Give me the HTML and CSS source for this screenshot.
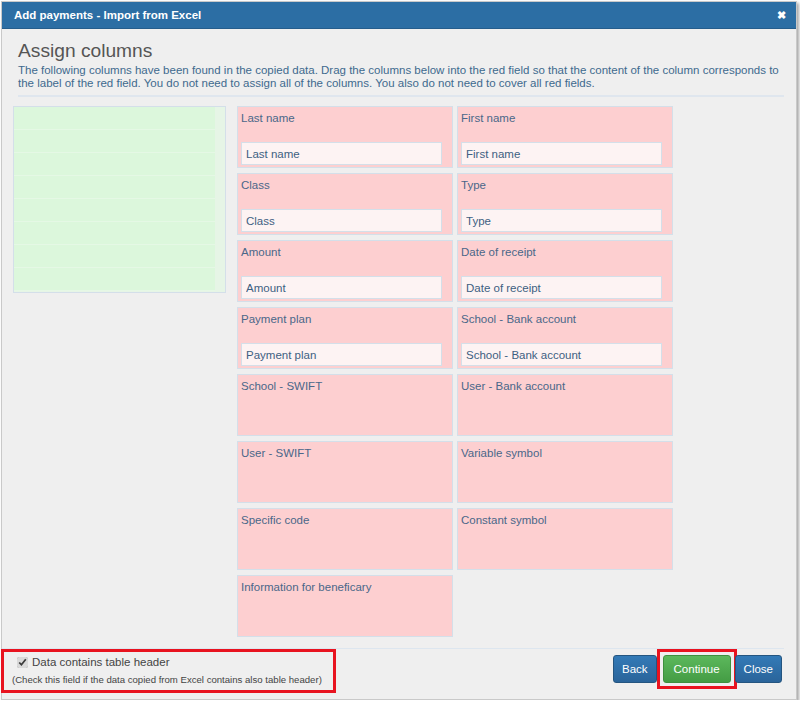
FILE: index.html
```html
<!DOCTYPE html>
<html lang="en">
<head>
    <meta charset="UTF-8">
    <title>Add payments - Import from Excel</title>
    <link rel="stylesheet" href="styles.css">
</head>
<body>
    <div class="dialog">
        <div class="dialog-header">
            <span class="dialog-title">Add payments - Import from Excel</span>
            <span class="dialog-close">&#10006;</span>
        </div>

        <div class="dialog-body">
            <h2>Assign columns</h2>
            <p class="intro">The following columns have been found in the copied data. Drag the columns below into the red field so that the content of the column corresponds to the label of the red field. You do not need to assign all of the columns. You also do not need to cover all red fields.</p>

            <div class="assign">
                <div class="source">
                    <div class="source-list">
                        <div class="source-row"></div>
                        <div class="source-row"></div>
                        <div class="source-row"></div>
                        <div class="source-row"></div>
                        <div class="source-row"></div>
                        <div class="source-row"></div>
                        <div class="source-row"></div>
                        <div class="source-row"></div>
                    </div>
                    <div class="source-bar"></div>
                </div>

                <div class="targets">
                    <div class="target">
                        <div class="target-label">Last name</div>
                        <input class="target-input" type="text" placeholder="Last name">
                    </div>
                    <div class="target">
                        <div class="target-label">First name</div>
                        <input class="target-input" type="text" placeholder="First name">
                    </div>
                    <div class="target">
                        <div class="target-label">Class</div>
                        <input class="target-input" type="text" placeholder="Class">
                    </div>
                    <div class="target">
                        <div class="target-label">Type</div>
                        <input class="target-input" type="text" placeholder="Type">
                    </div>
                    <div class="target">
                        <div class="target-label">Amount</div>
                        <input class="target-input" type="text" placeholder="Amount">
                    </div>
                    <div class="target">
                        <div class="target-label">Date of receipt</div>
                        <input class="target-input" type="text" placeholder="Date of receipt">
                    </div>
                    <div class="target">
                        <div class="target-label">Payment plan</div>
                        <input class="target-input" type="text" placeholder="Payment plan">
                    </div>
                    <div class="target">
                        <div class="target-label">School - Bank account</div>
                        <input class="target-input" type="text" placeholder="School - Bank account">
                    </div>
                    <div class="target">
                        <div class="target-label">School - SWIFT</div>
                    </div>
                    <div class="target">
                        <div class="target-label">User - Bank account</div>
                    </div>
                    <div class="target">
                        <div class="target-label">User - SWIFT</div>
                    </div>
                    <div class="target">
                        <div class="target-label">Variable symbol</div>
                    </div>
                    <div class="target">
                        <div class="target-label">Specific code</div>
                    </div>
                    <div class="target">
                        <div class="target-label">Constant symbol</div>
                    </div>
                    <div class="target">
                        <div class="target-label">Information for beneficary</div>
                    </div>
                </div>
            </div>
        </div>

        <div class="dialog-footer">
            <div class="header-option marked">
                <label class="check">
                    <input type="checkbox" checked>
                    Data contains table header
                </label>
                <div class="hint">(Check this field if the data copied from Excel contains also table header)</div>
            </div>

            <div class="buttons">
                <button class="btn btn-primary">Back</button>
                <div class="marked marked-btn">
                    <button class="btn btn-success">Continue</button>
                </div>
                <button class="btn btn-primary">Close</button>
            </div>
        </div>
    </div>
</body>
</html>
```

FILE: styles.css
```css
body {
    margin: 0;
    background: #ffffff;
    font-family: 'Liberation Sans', Arial, sans-serif;
    font-size: 11.5px;
}

.dialog {
    width: 794px;
    height: 697px;
    margin: 1px 0 0 1px;
    border: 1px solid #c9c9c9;
    background: #efefef;
    box-shadow: 2px 2px 3px rgba(0, 0, 0, 0.35);
    display: flex;
    flex-direction: column;
}

.dialog-header {
    height: 26px;
    background: #2c6ea4;
    color: #ffffff;
    display: flex;
    align-items: center;
    justify-content: space-between;
    padding: 0 10px 0 12px;
    border-bottom: 1px solid #255d8c;
}

.dialog-title {
    font-weight: bold;
    font-size: 11.5px;
}

.dialog-close {
    font-size: 11px;
    font-weight: bold;
}

.dialog-body {
    flex: 1;
    padding: 0 12px 0 12px;
}

h2 {
    margin: 11px 0 0 4px;
    font-size: 19.2px;
    font-weight: normal;
    line-height: 22px;
    color: #555555;
}

.intro {
    margin: 2px 0 0 4px;
    padding-bottom: 5px;
    line-height: 13px;
    color: #3e6a8e;
    border-bottom: 2px solid #dfe6ee;
}

.assign {
    display: flex;
    gap: 11px;
    margin-top: 9px;
}

.source {
    width: 211px;
    height: 185px;
    margin-left: -1px;
    border: 1px solid #d4dfe9;
    background: #e6f5e6;
    display: flex;
}

.source-list {
    width: 201px;
    display: flex;
    flex-direction: column;
}

.source-row {
    height: 22px;
    background: #dcf7dc;
    border-bottom: 1px solid #e5f8e5;
}

.source-bar {
    flex: 1;
}

.targets {
    display: grid;
    grid-template-columns: 216px 216px;
    grid-auto-rows: 62px;
    gap: 5px 4px;
}

.target {
    background: #fdcfd0;
    border: 1px solid #d4dfe9;
    padding: 4px 2px 0 3px;
    display: flex;
    flex-direction: column;
}

.target-label {
    color: #4a6789;
    line-height: 15px;
}

.target-input {
    margin-top: 16px;
    width: 201px;
    height: 23px;
    box-sizing: border-box;
    border: 1px solid #d4dfe9;
    background: #fdf3f3;
    padding: 0 4px;
    font-family: 'Liberation Sans', Arial, sans-serif;
    font-size: 11.5px;
    color: #3d5f82;
}

.target-input::placeholder {
    color: #3d5f82;
    opacity: 1;
}

.dialog-footer {
    margin: 0 12px 0 0;
    border-top: 1px solid #dde6ef;
    display: flex;
    justify-content: space-between;
    align-items: flex-start;
    height: 50px;
}

.marked {
    border: 3px solid #e8131f;
}

.header-option {
    width: 329px;
    height: 38px;
    margin-left: -1px;
}

.check {
    display: flex;
    align-items: center;
    gap: 4px;
    margin: 4px 0 0 13px;
    color: #444444;
}

.check input {
    margin: 0;
    width: 11px;
    height: 11px;
    accent-color: #d9d9d9;
}

.hint {
    margin: 6px 0 0 8px;
    font-size: 9.6px;
    color: #444444;
}

.buttons {
    display: flex;
    align-items: center;
    margin-right: 2px;
}

.marked-btn {
    padding: 3px 3px;
    margin-right: -2px;
}

.btn {
    height: 28px;
    border-radius: 3px;
    font-family: 'Liberation Sans', Arial, sans-serif;
    font-size: 11.5px;
    color: #ffffff;
    padding: 0 8px;
    cursor: pointer;
}

.btn-primary {
    background: linear-gradient(#337ab7, #2a649a);
    border: 1px solid #245580;
}

.btn-success {
    background: linear-gradient(#5cb85c, #449c44);
    border: 1px solid #3e8f3e;
    padding: 0 10px;
}
```
